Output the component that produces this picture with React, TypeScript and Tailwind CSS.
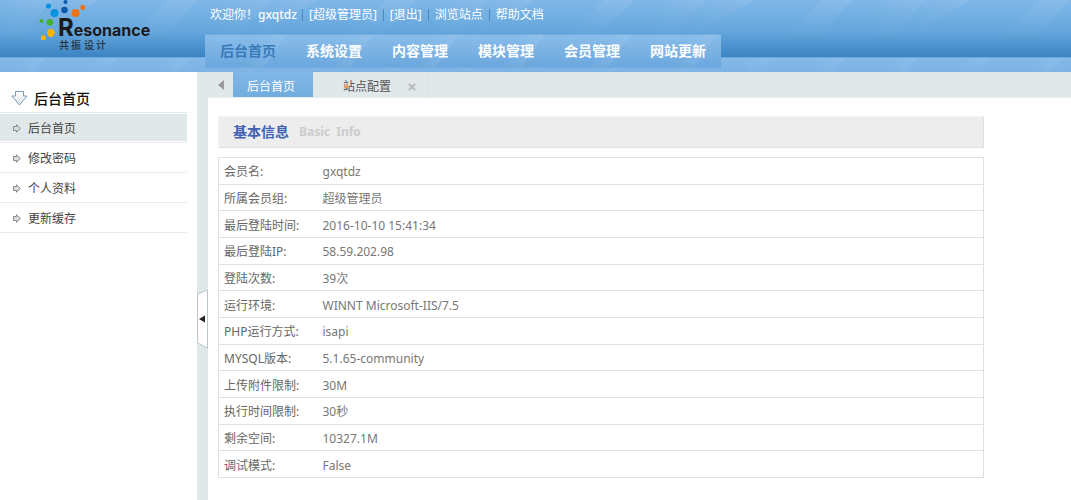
import { X } from 'lucide-react';
import React from 'react';

const navItems = ['后台首页', '系统设置', '内容管理', '模块管理', '会员管理', '网站更新'];
const menuItems = ['后台首页', '修改密码', '个人资料', '更新缓存'];
const topLinks = ['[超级管理员]', '[退出]', '浏览站点', '帮助文档'];

const info = [
  { label: '会员名:', value: 'gxqtdz' },
  { label: '所属会员组:', value: '超级管理员' },
  { label: '最后登陆时间:', value: '2016-10-10 15:41:34' },
  { label: '最后登陆IP:', value: '58.59.202.98' },
  { label: '登陆次数:', value: '39次' },
  { label: '运行环境:', value: 'WINNT Microsoft-IIS/7.5' },
  { label: 'PHP运行方式:', value: 'isapi' },
  { label: 'MYSQL版本:', value: '5.1.65-community' },
  { label: '上传附件限制:', value: '30M' },
  { label: '执行时间限制:', value: '30秒' },
  { label: '剩余空间:', value: '10327.1M' },
  { label: '调试模式:', value: 'False' },
];

// Diagonal light streaks, repeated along the header
function Streaks() {
  return (
    <svg className="absolute inset-0 w-full h-full" aria-hidden="true">
      <defs>
        <linearGradient id="streak" x1="0" y1="0" x2="1" y2="0">
          <stop offset="0.3" stopColor="#fff" stopOpacity="0" />
          <stop offset="1" stopColor="#fff" stopOpacity="0.08" />
        </linearGradient>
        <linearGradient id="fade" x1="0" y1="0" x2="0" y2="1">
          <stop offset="0" stopColor="#fff" />
          <stop offset="0.8" stopColor="#000" />
        </linearGradient>
        <mask id="fadeMask" maskUnits="userSpaceOnUse" x="0" y="0" width="218" height="50">
          <rect width="218" height="50" fill="url(#fade)" />
        </mask>
        <pattern id="streaks" width="218" height="72" patternUnits="userSpaceOnUse" x="-20">
          <g mask="url(#fadeMask)">
            <path d="M-30 0H0L-48 50H-80Z M188 0H218L170 50H138Z" fill="url(#streak)" />
            <path d="M30 0H73L25 50H-10Z" fill="url(#streak)" />
            <path d="M75 0H120L50 40H20Z" fill="url(#streak)" />
          </g>
          <path d="M120 58H139L117 72H98Z" fill="url(#streak)" />
          <path d="M186 58H211L197 72H172Z" fill="url(#streak)" />
          <path d="M44 58H66L52 72H30Z" fill="url(#streak)" />
        </pattern>
      </defs>
      <rect width="100%" height="72" fill="url(#streaks)" />
    </svg>
  );
}

function Logo() {
  return (
    <svg className="block" width="204" height="56" role="img" aria-label="Resonance 共振设计">
      <circle cx="65.5" cy="2" r="2" fill="#0a5cab" />
      <circle cx="64.5" cy="10" r="3.3" fill="#0a5cab" />
      <circle cx="48.5" cy="6" r="2.6" fill="#0b93e0" />
      <circle cx="54.5" cy="13" r="4" fill="#0b93e0" />
      <circle cx="75.5" cy="13" r="4" fill="#ee7214" />
      <circle cx="82.8" cy="7.5" r="2.5" fill="#ee7214" />
      <circle cx="41.5" cy="21" r="2" fill="#46b035" />
      <circle cx="49.8" cy="22.3" r="3.4" fill="#46b035" />
      <path d="M48.5 29.5L53 29L55 33L52.5 37L48.5 36.5L47 33Z" fill="#fbb400" />
      <path d="M41 36L44 35L46 37.5L45 40H41Z" fill="#fbb400" />
      <text x="58" y="36" fill="#1c1a1a" fontWeight="700" fontFamily="Inter, sans-serif">
        <tspan fontSize="24">R</tspan>
        <tspan fontSize="16">esonance</tspan>
      </text>
      <text x="59" y="49" fontSize="10" fontWeight="500" fill="#26303c" fontFamily="'Noto Sans CJK SC', sans-serif">
        <tspan x="59">共</tspan>
        <tspan x="71">振</tspan>
        <tspan x="84">设</tspan>
        <tspan x="96">计</tspan>
      </text>
    </svg>
  );
}

function Header() {
  return (
    <header className="relative flex h-[72px] bg-[linear-gradient(#80b7e8_0px,#64a6dc_32px,#3b83c3_57px,#72a9dc_57px,#72a9dc_58px,#84b9e9_58px,#7db3e5_72px)]">
      <Streaks />
      <div className="relative w-[205px] shrink-0">
        <Logo />
      </div>
      <div className="relative flex flex-col items-start">
        <div className="flex h-[34px] items-center pb-[5px] pl-[5px] text-white whitespace-nowrap">
          <span>
            欢迎你！<b className="font-medium">gxqtdz</b>
          </span>
          {topLinks.map((link) => (
            <React.Fragment key={link}>
              <span className="mx-[5px] h-3 w-px bg-[#4c87be]" />
              <a href="#" className="px-px hover:underline">{link}</a>
            </React.Fragment>
          ))}
        </div>
        <nav className="flex h-[34px] items-center border-y border-[#74ace0] bg-[linear-gradient(125deg,transparent_55%,rgba(255,255,255,0.08)_75%,transparent_75%),linear-gradient(#89bdea,#6ba7dd)] bg-[size:86px_100%,100%_100%]">
          {navItems.map((item, i) => (
            <a
              key={item}
              href="#"
              className={`w-[86px] text-center text-sm font-bold whitespace-nowrap ${i === 0 ? 'text-[#3a7aba]' : 'text-white'}`}
            >
              {item}
            </a>
          ))}
        </nav>
      </div>
    </header>
  );
}

function Sidebar() {
  return (
    <aside className="w-[197px] shrink-0 bg-white pr-2.5">
      <h2 className="flex h-[41px] items-center gap-1.5 border-b border-[#e3e9ee] pt-3.5 pl-[11px] text-sm font-medium text-[#111]">
        <svg width="17" height="16" viewBox="0 0 17 16">
          <defs>
            <linearGradient id="arrowFill" x1="0" y1="0" x2="0" y2="1">
              <stop offset="0" stopColor="#fff" />
              <stop offset="1" stopColor="#dfe3e8" />
            </linearGradient>
          </defs>
          <path d="M4.500 0.500H12.500V5H16L8.500 14L0.800 5H4.500Z" fill="url(#arrowFill)" stroke="#7d9ac4" />
        </svg>
        后台首页
      </h2>
      <ul>
        {menuItems.map((item, i) => (
          <li key={item} className="h-[30px] border-b border-[#e8ecf2] pt-px pb-px">
            <a
              href="#"
              className={`flex h-full items-center gap-[7px] pt-0.5 pl-[13px] text-[#444] ${i === 0 ? 'bg-[#e0e8ea]' : ''}`}
            >
              <svg width="8" height="9" viewBox="0 0 8 9">
                <path d="M0.500 2.500H3.500V0.800L7.300 4.500L3.500 8.200V6.500H0.500Z" fill="#ddd" stroke="#888" />
              </svg>
              {item}
            </a>
          </li>
        ))}
      </ul>
    </aside>
  );
}

function TabBar() {
  return (
    <div className="flex h-[26px] border-b border-[#e6ecee] bg-[#e0e8ea]">
      <button type="button" aria-label="向左滚动" className="flex w-[25px] items-center justify-center">
        <svg width="6" height="10" viewBox="0 0 6 10">
          <path d="M6 0V10L0 5Z" fill="#999" />
        </svg>
      </button>
      <button type="button" className="w-20 bg-linear-to-b from-[#80b7e7] to-[#70addf] pt-1 pr-1 text-white">
        后台首页
      </button>
      <div className="flex items-center border-r border-[#d8e0e3] pt-1 pr-2.5 pl-[30px] text-[#555]">
        <button type="button">站点配置</button>
        <button type="button" aria-label="关闭" className="ml-4 text-[#bbb]">
          <X size={10} strokeWidth={5} />
        </button>
      </div>
    </div>
  );
}

function BasicInfo() {
  return (
    <section className="pt-[18px] pr-0.5 pb-5 pl-2.5">
      <div className="w-[90%]">
        <h1 className="flex h-8 items-center gap-2.5 border border-[#e0e0e0] border-t-[#f2f2f2] border-l-[#f2f2f2] bg-[#ededed] px-3.5 text-sm font-bold text-[#3f62b5]">
          基本信息
          <span className="text-xs text-[#ccc]">Basic&nbsp; Info</span>
        </h1>
        <table className="mt-[9px] h-[321px] w-full border-collapse text-left text-[#777]">
          <tbody>
            {info.map((row) => (
              <tr key={row.label} className="border border-[#e0e0e0]">
                <th scope="row" className="w-[100px] pt-[3px] pl-[5px] font-normal whitespace-nowrap text-[#666]">
                  {row.label}
                </th>
                <td className="pt-[3px] pl-1">{row.value}</td>
              </tr>
            ))}
          </tbody>
        </table>
      </div>
    </section>
  );
}

export default function App() {
  return (
    <div className="flex min-h-screen flex-col bg-white font-['Noto_Sans','Noto_Sans_CJK_SC',sans-serif] text-xs">
      <Header />
      <div className="flex flex-1">
        <Sidebar />
        <div className="w-[11px] shrink-0 bg-[#e0e8ea] pt-[217px]">
          <button type="button" aria-label="收起菜单" className="block">
            <svg width="11" height="60" viewBox="0 0 11 60">
              <path d="M0.500 5L10.500 1V59L0.500 54Z" fill="#fff" stroke="#b9c7cc" />
              <path d="M8 26.500V33.500L2 30Z" fill="#222" />
            </svg>
          </button>
        </div>
        <main className="min-w-0 flex-1">
          <TabBar />
          <BasicInfo />
        </main>
      </div>
    </div>
  );
}
